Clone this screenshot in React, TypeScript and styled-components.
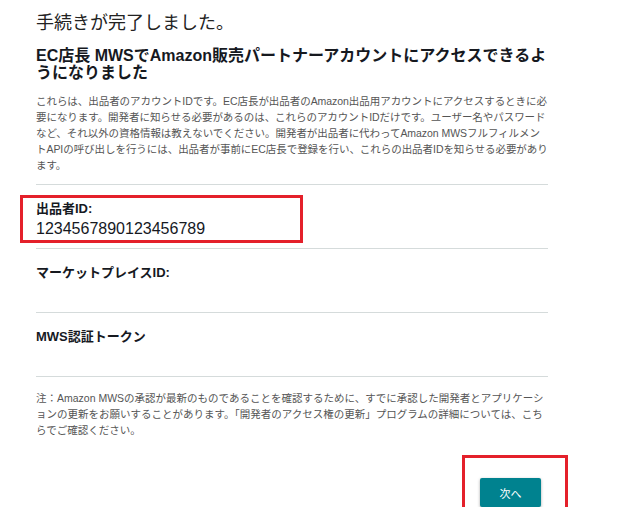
import styled, { createGlobalStyle } from "styled-components";

const GlobalStyle = createGlobalStyle`
  body {
    margin: 0;
    background: #ffffff;
    font-family: "Liberation Sans", "Noto Sans CJK JP", sans-serif;
    color: #16191f;
  }
`;

const Page = styled.main`
  width: 512px;
  padding: 11px 0 0 36px;
`;

const Title = styled.h1`
  margin: 0;
  font-size: 18px;
  line-height: 24px;
  font-weight: 400;
  color: #222222;
`;

const SubTitle = styled.h2`
  margin: 12px 0 0;
  font-size: 16px;
  line-height: 17px;
  font-weight: 700;
  color: #16191f;
`;

const Description = styled.p`
  margin: 12px 0 11px;
  font-size: 10.5px;
  line-height: 16px;
  letter-spacing: -0.05px;
  color: #555555;
`;

const Field = styled.section`
  position: relative;
  border-top: 1px solid #d5dbdb;
  padding: 15px 0 8px;
`;

const FieldLabel = styled.div`
  font-size: 13px;
  line-height: 18px;
  font-weight: 700;
  color: #16191f;
`;

const FieldValue = styled.div`
  font-size: 16px;
  line-height: 22px;
  min-height: 22px;
  color: #16191f;
`;

const Note = styled.p`
  margin: 0;
  border-top: 1px solid #d5dbdb;
  padding-top: 13px;
  font-size: 10.5px;
  line-height: 16px;
  color: #555555;
`;

const Footer = styled.div`
  display: flex;
  justify-content: flex-end;
  padding: 40px 7px 0 0;
`;

const ButtonWrap = styled.div`
  position: relative;
`;

const NextButton = styled.button`
  width: 61px;
  height: 29px;
  border: none;
  border-radius: 2px;
  background: #00828f;
  color: #ffffff;
  font-family: inherit;
  font-size: 11px;
  box-shadow: 0 1px 3px rgba(0, 0, 0, 0.35);
  cursor: pointer;
`;

const Callout = styled.div<{ $top: number; $left: number; $width: number; $height: number }>`
  position: absolute;
  top: ${(p) => p.$top}px;
  left: ${(p) => p.$left}px;
  width: ${(p) => p.$width}px;
  height: ${(p) => p.$height}px;
  box-sizing: border-box;
  border: 3px solid #e4202a;
  pointer-events: none;
`;

const fields = [
  { label: "出品者ID:", value: "1234567890123456789", highlight: true },
  { label: "マーケットプレイスID:", value: "", highlight: false },
  { label: "MWS認証トークン", value: "", highlight: false },
];

export default function App() {
  return (
    <>
      <GlobalStyle />
      <Page>
        <Title>手続きが完了しました。</Title>
        <SubTitle>
          EC店長 MWSでAmazon販売パートナーアカウントにアクセスできるようになりました
        </SubTitle>
        <Description>
          これらは、出品者のアカウントIDです。EC店長が出品者のAmazon出品用アカウントにアクセスするときに必要になります。開発者に知らせる必要があるのは、これらのアカウントIDだけです。ユーザー名やパスワードなど、それ以外の資格情報は教えないでください。開発者が出品者に代わってAmazon
          MWSフルフィルメントAPIの呼び出しを行うには、出品者が事前にEC店長で登録を行い、これらの出品者IDを知らせる必要があります。
        </Description>
        {fields.map((f) => (
          <Field key={f.label}>
            {f.highlight && <Callout $top={10} $left={-16} $width={283} $height={48} />}
            <FieldLabel>{f.label}</FieldLabel>
            <FieldValue>{f.value}</FieldValue>
          </Field>
        ))}
        <Note>
          注：Amazon
          MWSの承認が最新のものであることを確認するために、すでに承認した開発者とアプリケーションの更新をお願いすることがあります。「開発者のアクセス権の更新」プログラムの詳細については、こちらでご確認ください。
        </Note>
        <Footer>
          <ButtonWrap>
            <Callout $top={-23} $left={-18} $width={106} $height={61} />
            <NextButton>次へ</NextButton>
          </ButtonWrap>
        </Footer>
      </Page>
    </>
  );
}
